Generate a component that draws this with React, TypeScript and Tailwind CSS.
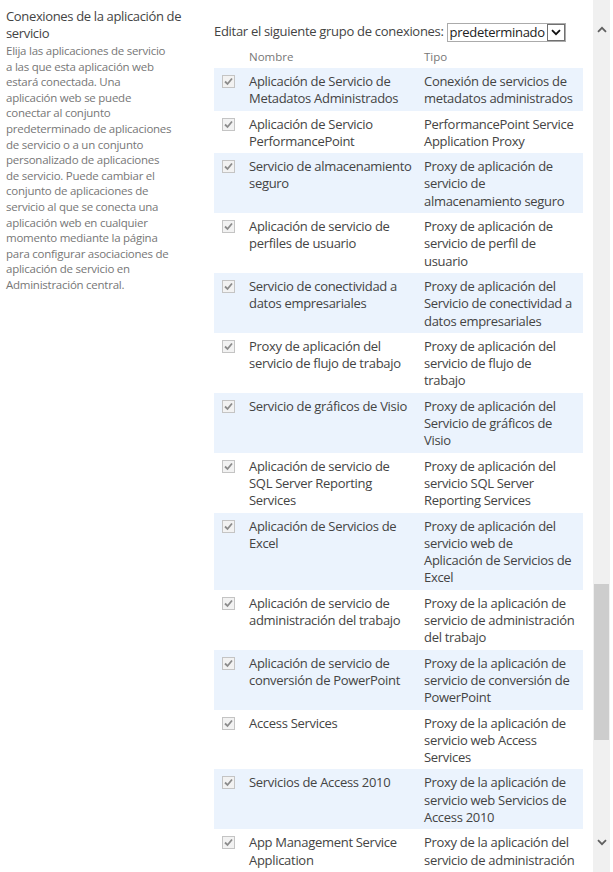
import React from "react";

type Row = { name: string[]; type: string[] };

const rows: Row[] = [
  { name: ["Aplicación de Servicio de", "Metadatos Administrados"], type: ["Conexión de servicios de", "metadatos administrados"] },
  { name: ["Aplicación de Servicio", "PerformancePoint"], type: ["PerformancePoint Service", "Application Proxy"] },
  { name: ["Servicio de almacenamiento", "seguro"], type: ["Proxy de aplicación de", "servicio de", "almacenamiento seguro"] },
  { name: ["Aplicación de servicio de", "perfiles de usuario"], type: ["Proxy de aplicación de", "servicio de perfil de", "usuario"] },
  { name: ["Servicio de conectividad a", "datos empresariales"], type: ["Proxy de aplicación del", "Servicio de conectividad a", "datos empresariales"] },
  { name: ["Proxy de aplicación del", "servicio de flujo de trabajo"], type: ["Proxy de aplicación del", "servicio de flujo de", "trabajo"] },
  { name: ["Servicio de gráficos de Visio"], type: ["Proxy de aplicación del", "Servicio de gráficos de", "Visio"] },
  { name: ["Aplicación de servicio de", "SQL Server Reporting", "Services"], type: ["Proxy de aplicación del", "servicio SQL Server", "Reporting Services"] },
  { name: ["Aplicación de Servicios de", "Excel"], type: ["Proxy de aplicación del", "servicio web de", "Aplicación de Servicios de", "Excel"] },
  { name: ["Aplicación de servicio de", "administración del trabajo"], type: ["Proxy de la aplicación de", "servicio de administración", "del trabajo"] },
  { name: ["Aplicación de servicio de", "conversión de PowerPoint"], type: ["Proxy de la aplicación de", "servicio de conversión de", "PowerPoint"] },
  { name: ["Access Services"], type: ["Proxy de la aplicación de", "servicio web Access", "Services"] },
  { name: ["Servicios de Access 2010"], type: ["Proxy de la aplicación de", "servicio web Servicios de", "Access 2010"] },
  { name: ["App Management Service", "Application"], type: ["Proxy de la aplicación del", "servicio de administración"] },
];

const desc = [
  "Elija las aplicaciones de servicio",
  "a las que esta aplicación web",
  "estará conectada. Una",
  "aplicación web se puede",
  "conectar al conjunto",
  "predeterminado de aplicaciones",
  "de servicio o a un conjunto",
  "personalizado de aplicaciones",
  "de servicio. Puede cambiar el",
  "conjunto de aplicaciones de",
  "servicio al que se conecta una",
  "aplicación web en cualquier",
  "momento mediante la página",
  "para configurar asociaciones de",
  "aplicación de servicio en",
  "Administración central.",
];

function Check() {
  return (
    <div className="w-[13px] h-[13px] border border-[#c4c4c4] bg-[#f2f2f2] flex items-center justify-center">
      <svg width="11" height="11" viewBox="0 0 11 11">
        <path d="M2 5.5 L4.5 8 L9 2.5" fill="none" stroke="#8c8c8c" strokeWidth="1.8" />
      </svg>
    </div>
  );
}

export default function App() {
  const font = { fontFamily: "'Open Sans', 'Noto Sans', sans-serif" };
  return (
    <div className="w-[613px] h-[872px] overflow-hidden flex bg-white text-[#444]" style={font}>
      <div className="flex-1 flex overflow-hidden">
        <div className="w-[214px] pl-[6px] pt-[8px] shrink-0">
          <div className="text-[13px] leading-[17px] tracking-[-0.35px] text-[#444] whitespace-nowrap">
            <div>Conexiones de la aplicación de</div>
            <div>servicio</div>
          </div>
          <div className="mt-[1px] text-[11.5px] leading-[15.6px] tracking-[-0.25px] text-[#777] whitespace-nowrap">
            {desc.map((d, i) => (
              <div key={i}>{d}</div>
            ))}
          </div>
        </div>
        <div className="w-[369px] shrink-0 pt-[22px] tracking-[-0.3px]">
          <div className="flex items-center h-[20px] text-[13px] whitespace-nowrap">
            <span>Editar el siguiente grupo de conexiones:</span>
            <div className="ml-[3px] flex items-center h-[19px] w-[119px] border border-[#ababab] bg-white">
              <span className="flex-1 pl-[2px] text-[13px] leading-[17px] text-[#222]">predeterminado</span>
              <div className="w-[18px] h-[17px] border border-[#707070] flex items-center justify-center bg-white">
                <svg width="10" height="7" viewBox="0 0 10 7">
                  <path d="M1 1.2 L5 5.2 L9 1.2" fill="none" stroke="#111" strokeWidth="1.8" />
                </svg>
              </div>
            </div>
          </div>
          <div className="mt-[3px] h-[23px] flex items-center text-[11.5px] text-[#777] tracking-normal">
            <div className="w-[35px]" />
            <div className="w-[175px]">Nombre</div>
            <div>Tipo</div>
          </div>
          <div>
            {rows.map((r, i) => (
              <div key={i} className={`flex pt-[5px] pb-[3px] text-[13px] leading-[17.3px] ${i % 2 === 0 ? "bg-[#ebf3fd]" : "bg-white"}`}>
                <div className="w-[35px] pl-[8px] pt-[2px] shrink-0">
                  <Check />
                </div>
                <div className="w-[175px] shrink-0 whitespace-nowrap">
                  {r.name.map((l, j) => (
                    <div key={j}>{l}</div>
                  ))}
                </div>
                <div className="flex-1 whitespace-nowrap">
                  {r.type.map((l, j) => (
                    <div key={j}>{l}</div>
                  ))}
                  {i === rows.length - 1 ? <div>&nbsp;</div> : null}
                </div>
              </div>
            ))}
          </div>
        </div>
      </div>
      <div className="w-[17px] bg-[#f0f0f0] flex flex-col items-center shrink-0 mr-[3px]">
        <div className="h-[58px] flex items-center justify-center">
          <svg width="10" height="7" viewBox="0 0 10 7">
            <path d="M1 5.8 L5 1.8 L9 5.8" fill="none" stroke="#606060" strokeWidth="1.8" />
          </svg>
        </div>
        <div className="h-[526px]" />
        <div className="w-[15px] h-[156px] bg-[#cdcdcd] ml-[1px] self-start" />
        <div className="h-[95px]" />
        <div className="flex items-center justify-center h-[14px]">
          <svg width="10" height="7" viewBox="0 0 10 7">
            <path d="M1 1.2 L5 5.2 L9 1.2" fill="none" stroke="#606060" strokeWidth="1.8" />
          </svg>
        </div>
      </div>
    </div>
  );
}
